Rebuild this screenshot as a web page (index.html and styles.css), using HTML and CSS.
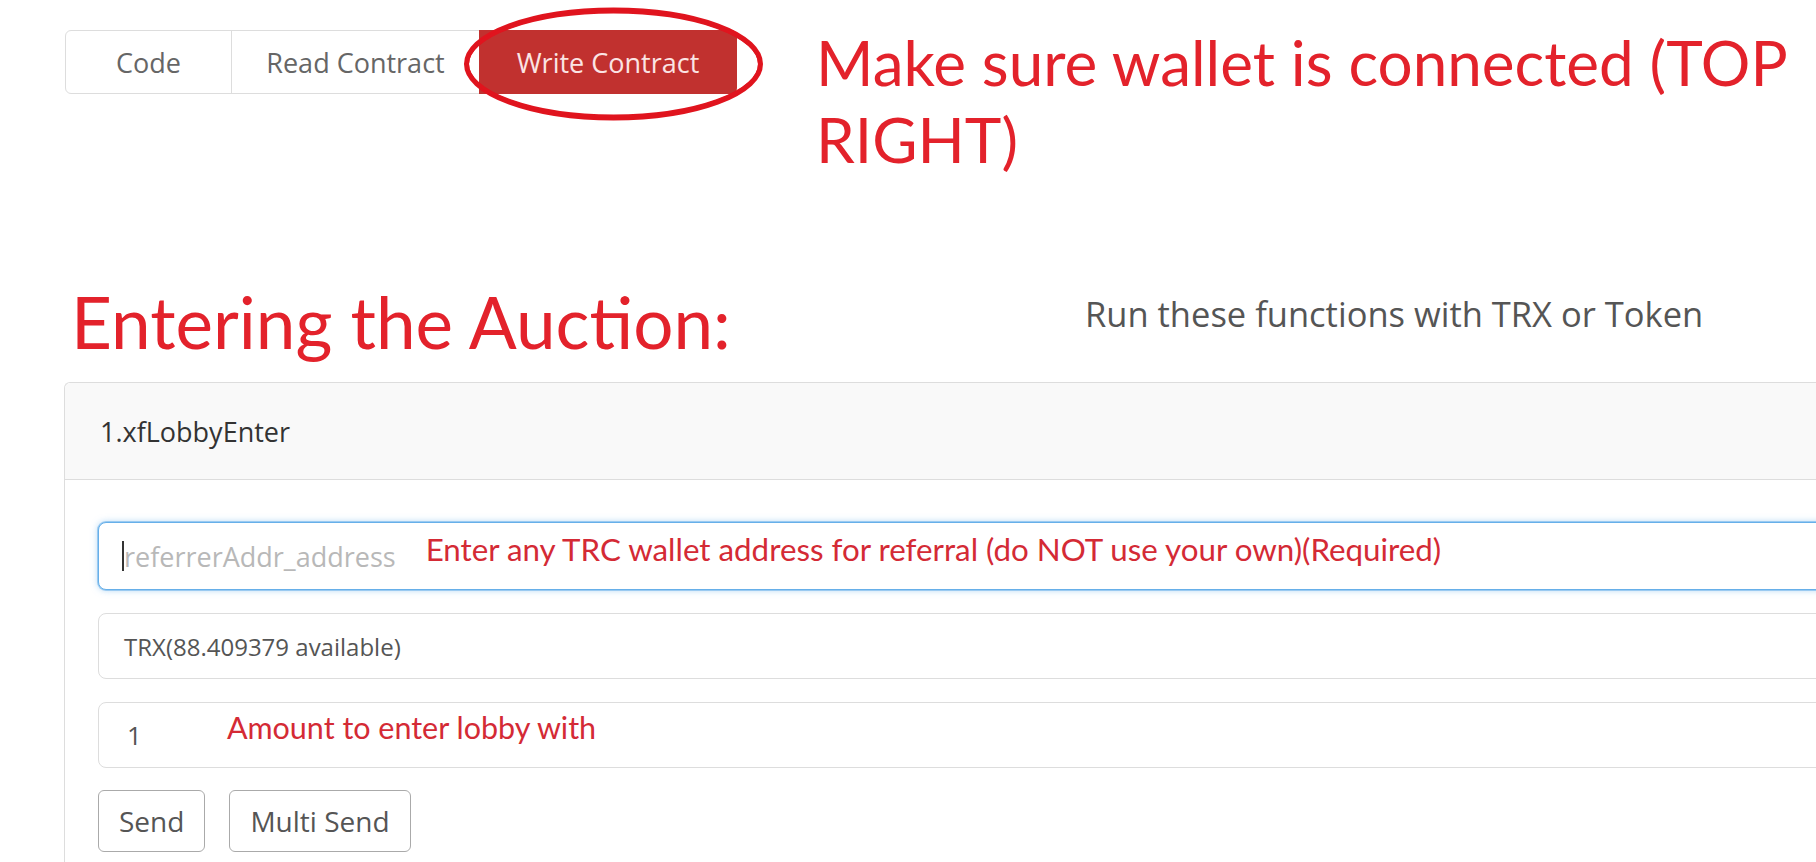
FILE: index.html
```html
<!DOCTYPE html>
<html lang="en">
<head>
<meta charset="utf-8">
<title>Write Contract</title>
<link rel="stylesheet" href="styles.css">
</head>
<body>
<div class="page">
  <div class="top">
    <div class="tabs">
      <div class="tab tab-code">Code</div>
      <div class="tab tab-read">Read Contract</div>
      <div class="tab tab-write">Write Contract</div>
      <svg class="circle" viewBox="0 0 301 114" aria-hidden="true">
        <ellipse cx="150.5" cy="57" rx="147" ry="54" fill="none" stroke="#e0141e" stroke-width="5"/>
        <ellipse cx="150.5" cy="57" rx="146" ry="52" fill="none" stroke="#e0141e" stroke-width="3"/>
      </svg>
    </div>
    <p class="note note-top">Make sure wallet is connected (TOP<br>RIGHT)</p>
  </div>
  <div class="section-head">
    <h2 class="heading">Entering the Auction:</h2>
    <p class="hint">Run these functions with TRX or Token</p>
  </div>
  <div class="card">
    <div class="card-header">1.xfLobbyEnter</div>
    <div class="card-body">
      <div class="field field-focus">
        <span class="caret"></span>
        <span class="placeholder">referrerAddr_address</span>
        <span class="note note-inline note-ref">Enter any TRC wallet address for referral (do NOT use your own)(Required)</span>
      </div>
      <div class="field field-select">
        <span class="value value-small">TRX(88.409379 available)</span>
      </div>
      <div class="field field-amount">
        <span class="value">1</span>
        <span class="note note-inline note-amount">Amount to enter lobby with</span>
      </div>
      <div class="actions">
        <button class="btn" type="button">Send</button>
        <button class="btn" type="button">Multi Send</button>
      </div>
    </div>
  </div>
</div>
</body>
</html>
```
FILE: styles.css
```css
html, body {
  margin: 0;
  padding: 0;
  overflow: hidden;
  background: #ffffff;
}

body {
  width: 1816px;
  height: 862px;
  font-family: "Open Sans", "Noto Sans", sans-serif;
  color: #555555;
}

.page {
  padding-left: 64px;
}

/* ---------- top row ---------- */
.top {
  display: flex;
  align-items: flex-start;
  height: 177px;
}

.tabs {
  position: relative;
  display: flex;
  margin-top: 30px;
  margin-left: 1px;
  height: 62px;
  border: 1px solid #dddddd;
  border-radius: 6px;
}

.tab {
  display: flex;
  align-items: center;
  justify-content: center;
  font-size: 27px;
  color: #666666;
  white-space: nowrap;
}

.tab-code {
  width: 165px;
  border-right: 1px solid #dddddd;
}

.tab-read {
  width: 247px;
}

.tab-write {
  width: 258px;
  margin: -1px -1px -1px 0;
  background: #c1312f;
  color: #fbe4e4;
  border-radius: 0 6px 6px 0;
}

.circle {
  position: absolute;
  left: 397px;
  top: -24px;
  width: 301px;
  height: 114px;
}

.note {
  font-family: "Lato", "Carlito", sans-serif;
  white-space: nowrap;
}

.note-top {
  margin: 24px 0 0 79px;
  font-size: 62px;
  line-height: 77px;
  color: #e3222b;
}

/* ---------- section heading ---------- */
.section-head {
  display: grid;
  grid-template-columns: 1014px auto;
  align-items: start;
  padding-left: 7px;
}

.heading {
  margin: 102px 0 6px;
  font-family: "Lato", "Carlito", sans-serif;
  font-weight: 400;
  font-size: 71px;
  line-height: 86px;
  color: #e3222b;
  white-space: nowrap;
}

.hint {
  margin: 114px 0 0;
  font-size: 34.5px;
  line-height: 46px;
  color: #555555;
  white-space: nowrap;
}

/* ---------- card ---------- */
.card {
  margin-top: 11px;
  width: 1900px;
  height: 600px;
  border: 1px solid #dddddd;
  border-right: none;
  border-radius: 6px 0 0 0;
}

.card-header {
  display: flex;
  align-items: center;
  height: 96px;
  padding-left: 35px;
  background: #f9f9f9;
  border-bottom: 1px solid #dddddd;
  border-radius: 6px 0 0 0;
  font-size: 27px;
  color: #333333;
}

.card-body {
  padding: 42px 0 0 33px;
}

.field {
  box-sizing: border-box;
  display: flex;
  align-items: center;
  width: 1800px;
  height: 66px;
  margin-bottom: 23px;
  padding-left: 25px;
  border: 1px solid #dddddd;
  border-radius: 8px;
  background: #ffffff;
}

.field-focus {
  height: 68px;
  padding-left: 23px;
  border-color: #66afe9;
  box-shadow: 0 0 0 1px rgba(102, 175, 233, 0.55), 0 0 7px rgba(102, 175, 233, 0.55);
}

.caret {
  width: 2px;
  height: 30px;
  background: #333333;
}

.placeholder {
  font-size: 27px;
  color: #b8b8b8;
}

.note-inline {
  font-size: 31.3px;
  line-height: 1.2;
  color: #d42a35;
}

.note-ref {
  margin-left: 30px;
  margin-bottom: 12px;
}

.value {
  font-size: 26px;
  color: #555555;
}

.value-small {
  font-size: 24px;
}

.field-amount {
  margin-bottom: 22px;
  padding-left: 28px;
}

.note-amount {
  margin-left: 85px;
  margin-bottom: 16px;
  font-size: 30.5px;
}

.actions {
  display: flex;
  gap: 24px;
}

.btn {
  height: 62px;
  padding: 0 20px;
  border: 1px solid #aaaaaa;
  border-radius: 6px;
  background: #ffffff;
  font-family: "Open Sans", "Noto Sans", sans-serif;
  font-size: 28px;
  color: #555555;
}
```
